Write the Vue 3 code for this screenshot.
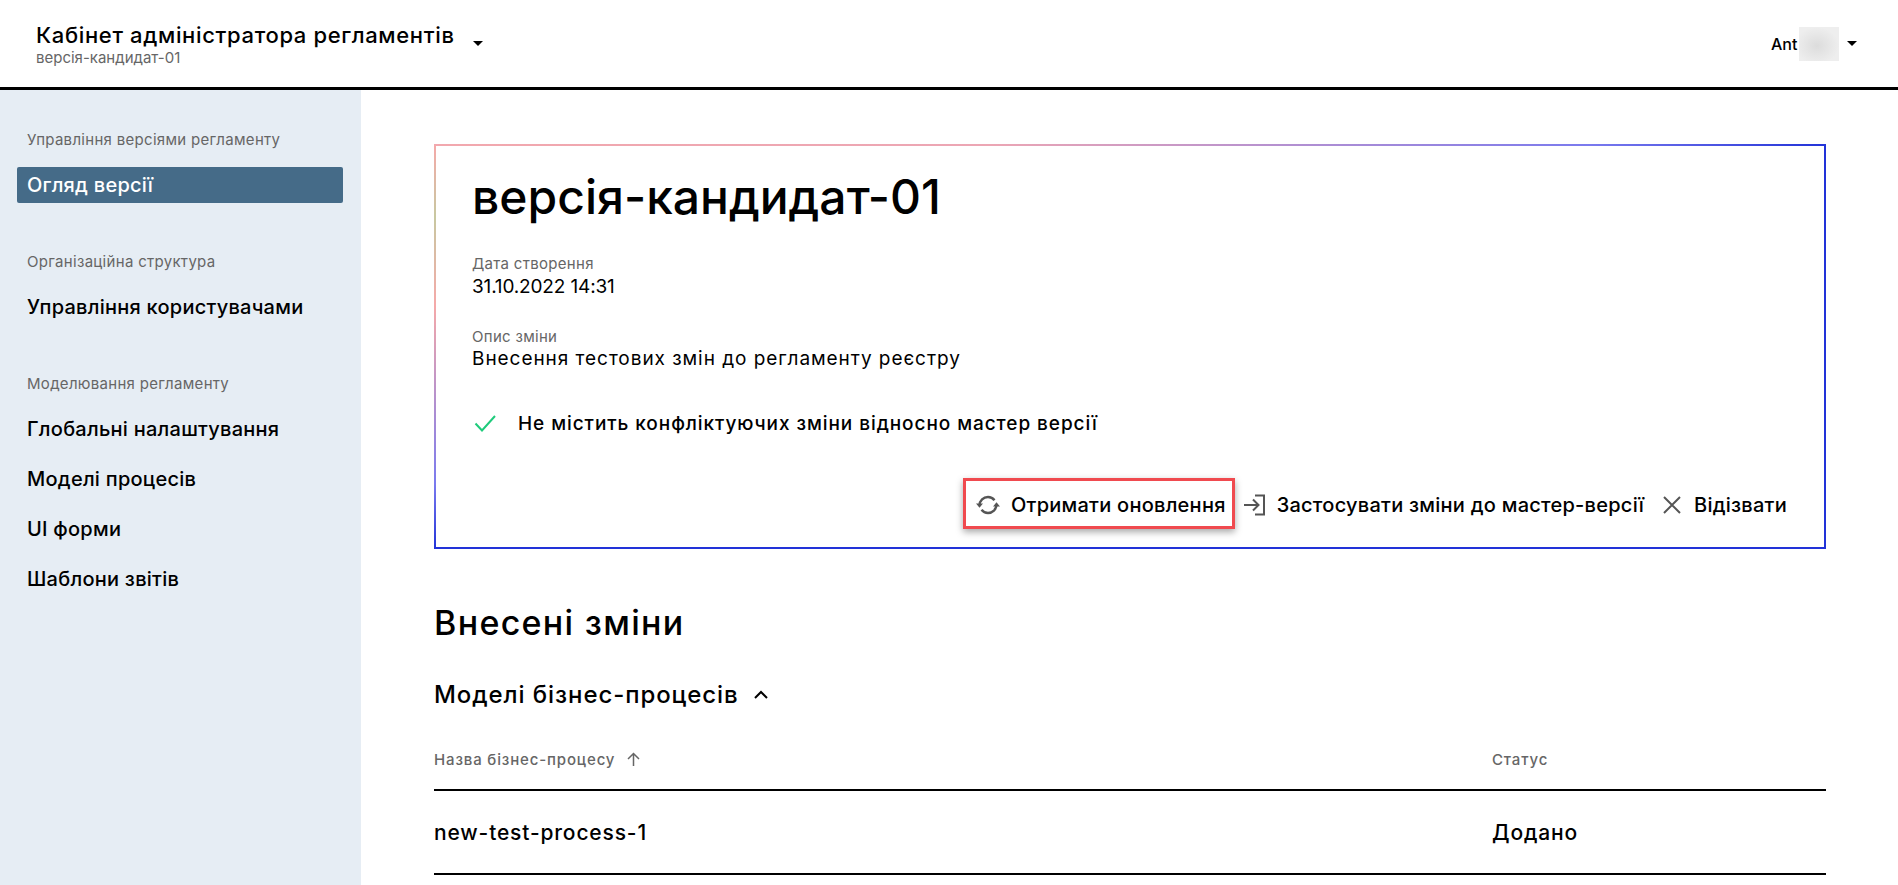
<script setup>
const groups = [
  { title: "Управління версіями регламенту", items: [{ name: "Огляд версії", active: true }] },
  { title: "Організаційна структура", items: [{ name: "Управління користувачами" }] },
  {
    title: "Моделювання регламенту",
    items: [
      { name: "Глобальні налаштування" },
      { name: "Моделі процесів" },
      { name: "UI форми" },
      { name: "Шаблони звітів" },
    ],
  },
];
</script>

<template>
  <div class="page">
    <header class="header">
      <div class="brand">
        <div class="brand-text">
          <div class="brand-title">Кабінет адміністратора регламентів</div>
          <div class="brand-sub">версія-кандидат-01</div>
        </div>
        <span class="caret brand-caret"></span>
      </div>
      <div class="user">
        <span class="user-name">Ant</span>
        <span class="user-blur"></span>
        <span class="caret"></span>
      </div>
    </header>

    <div class="body">
      <aside class="sidebar">
        <section v-for="group in groups" :key="group.title" class="nav-group">
          <div class="nav-title">{{ group.title }}</div>
          <a
            v-for="item in group.items"
            :key="item.name"
            :class="['nav-item', { active: item.active }]"
            >{{ item.name }}</a
          >
        </section>
      </aside>

      <main class="main">
        <section class="card">
          <h1 class="card-title">версія-кандидат-01</h1>
          <div class="meta first">
            <div class="meta-label">Дата створення</div>
            <div class="meta-value date">31.10.2022 14:31</div>
          </div>
          <div class="meta">
            <div class="meta-label">Опис зміни</div>
            <div class="meta-value">Внесення тестових змін до регламенту реєстру</div>
          </div>
          <div class="status">
            <svg class="check" width="24" height="24" viewBox="0 0 24 24" fill="none">
              <path d="M2.5 12.5l6.5 7L22 5" stroke="#1fcb7c" stroke-width="2" />
            </svg>
            <span>Не містить конфліктуючих зміни відносно мастер версії</span>
          </div>
          <div class="actions">
            <button class="action highlighted">
              <svg width="24" height="22" viewBox="0 0 24 22" fill="none" stroke="#555" stroke-width="2.4">
                <path d="M3.5 11.5C3.5 6.5 7.5 3 12 3c2.8 0 5 1.2 6.5 3.2" />
                <path d="M20.5 10.5c0 5-4 8.5-8.5 8.5-2.8 0-5-1.2-6.5-3.2" />
                <path d="M0 9.5h7l-3.5 4.2z" fill="#555" stroke="none" />
                <path d="M17 12.5h7l-3.5-4.2z" fill="#555" stroke="none" />
              </svg>
              <span>Отримати оновлення</span>
            </button>
            <button class="action">
              <svg width="22" height="22" viewBox="0 0 22 22" fill="none" stroke="#555" stroke-width="2">
                <path d="M11 1.5h9v19h-9" />
                <path d="M0 11h14" />
                <path d="M9 5.5l5.5 5.5L9 16.5" />
              </svg>
              <span>Застосувати зміни до мастер-версії</span>
            </button>
            <button class="action revoke">
              <svg width="18" height="18" viewBox="0 0 18 18" fill="none" stroke="#555" stroke-width="2">
                <path d="M1 1l16 16M17 1L1 17" />
              </svg>
              <span>Відізвати</span>
            </button>
          </div>
        </section>

        <h2 class="changes-title">Внесені зміни</h2>
        <div class="section-title">
          <span>Моделі бізнес-процесів</span>
          <svg width="14" height="9" viewBox="0 0 14 9" fill="none" stroke="#000" stroke-width="2">
            <path d="M1 8l6-6 6 6" />
          </svg>
        </div>

        <div class="row head">
          <div class="head-cell">
            <span>Назва бізнес-процесу</span>
            <svg width="13" height="14" viewBox="0 0 13 14" fill="none" stroke="#666" stroke-width="1.5">
              <path d="M6.5 14V1.5M1 7l5.5-5.5L12 7" />
            </svg>
          </div>
          <div class="head-cell">Статус</div>
        </div>
        <div class="row">
          <div>new-test-process-1</div>
          <div>Додано</div>
        </div>
      </main>
    </div>
  </div>
</template>

<style scoped>
.page {
  display: flex;
  flex-direction: column;
  height: 885px;
  overflow: hidden;
  font-family: Inter, "Noto Sans", sans-serif;
  color: #000;
}

/* Шапка */
.header {
  display: flex;
  justify-content: space-between;
  align-items: center;
  flex: none;
  height: 87px;
  padding: 0 41px 0 36px;
  border-bottom: 3px solid #000;
}
.brand {
  display: flex;
  align-items: center;
}
.brand-text {
  margin-top: 2px;
}
.brand-title {
  font-size: 22px;
  line-height: 26px;
  font-weight: 500;
  letter-spacing: 0.65px;
}
.brand-sub {
  margin-top: 1px;
  font-size: 15px;
  line-height: 18px;
  color: #666;
}
.brand-caret {
  margin: 0 0 1px 18px;
  align-self: center;
}
.caret {
  display: inline-block;
  width: 0;
  height: 0;
  border-left: 5px solid transparent;
  border-right: 5px solid transparent;
  border-top: 5px solid #000;
}
.user {
  display: flex;
  align-items: center;
}
.user-name {
  width: 28px;
  font-size: 16px;
  font-weight: 500;
}
.user-blur {
  width: 40px;
  height: 34px;
  margin-right: 8px;
  background: radial-gradient(ellipse at 45% 55%, #dcdcdc 0, #eee 70%);
}

/* Боковое меню */
.body {
  display: flex;
  flex: 1;
  min-height: 0;
}
.sidebar {
  flex: none;
  width: 361px;
  box-sizing: border-box;
  padding: 40px 18px 0 17px;
  background: #e6edf4;
}
.nav-group {
  display: flex;
  flex-direction: column;
  gap: 14px;
  margin-bottom: 49px;
}
.nav-title {
  height: 20px;
  margin-bottom: 3px;
  padding-left: 10px;
  font-size: 15px;
  line-height: 20px;
  letter-spacing: 0.3px;
  color: #666;
}
.nav-item {
  height: 36px;
  padding-left: 10px;
  border-radius: 2px;
  font-size: 20px;
  line-height: 36px;
  font-weight: 500;
  letter-spacing: 0.25px;
}
.nav-item.active {
  background: #456b88;
  color: #fff;
}

/* Основная область */
.main {
  flex: 1;
  padding: 54px 72px 0 73px;
  min-width: 0;
}
.card {
  height: 405px;
  box-sizing: border-box;
  padding: 23px 39px 0 38px;
  background:
    linear-gradient(90deg, #f2a8ae 0%, #eca6b4 40%, #7a7aee 83%, #2233d8 100%) top / 100% 2px no-repeat,
    linear-gradient(180deg, #f5a9a9 0%, #c8c8a0 18%, #f5a9a9 40%, #7a7aee 84%, #2233d8 100%) left / 2px 100% no-repeat,
    linear-gradient(#2233d8, #2233d8) right / 2px 100% no-repeat,
    linear-gradient(#2233d8, #2233d8) bottom / 100% 2px no-repeat;
}
.card-title {
  margin: 0;
  font-size: 48px;
  line-height: 60px;
  font-weight: 500;
}
.meta {
  margin-top: 29px;
}
.meta.first {
  margin-top: 27px;
}
.meta-label {
  font-size: 15px;
  line-height: 20px;
  letter-spacing: 0.3px;
  color: #666;
}
.meta-value {
  font-size: 19px;
  line-height: 24px;
  letter-spacing: 0.95px;
}
.meta-value.date {
  padding-top: 1px;
  height: 23px;
  line-height: 23px;
  letter-spacing: -0.15px;
}
.status {
  display: flex;
  align-items: center;
  gap: 21px;
  margin-top: 40px;
  margin-left: 1px;
  height: 24px;
  font-size: 19px;
  font-weight: 500;
  letter-spacing: 0.93px;
}
.actions {
  display: flex;
  justify-content: flex-end;
  align-items: center;
  gap: 19px;
  margin-top: 43px;
  height: 51px;
}
.action {
  display: flex;
  align-items: center;
  gap: 11px;
  padding: 3px 0 0;
  border: 0;
  background: none;
  font: inherit;
  font-size: 20px;
  font-weight: 500;
  letter-spacing: 0.25px;
  color: #000;
}
.action.revoke {
  gap: 13px;
}
.action.highlighted {
  box-sizing: border-box;
  height: 51px;
  margin-right: -10px;
  padding: 3px 6px 0 10px;
  border: 3px solid #f04a4f;
  box-shadow: 0 3px 7px rgba(0, 0, 0, 0.35);
}

.changes-title {
  margin: 54px 0 0;
  font-size: 34px;
  line-height: 40px;
  font-weight: 500;
  letter-spacing: 1.3px;
}
.section-title {
  display: flex;
  align-items: center;
  gap: 15px;
  margin-top: 35px;
  height: 32px;
  font-size: 24px;
  font-weight: 500;
  letter-spacing: 0.92px;
}
.row {
  display: grid;
  grid-template-columns: 1058px 1fr;
  align-items: center;
  height: 82px;
  border-bottom: 2px solid #000;
  font-size: 21px;
  font-weight: 500;
  letter-spacing: 0.85px;
}
.row.head {
  height: 60px;
  margin-top: 19px;
  font-size: 15px;
  font-weight: 500;
  letter-spacing: 0.85px;
  color: #666;
}
.head-cell {
  display: flex;
  align-items: center;
  gap: 12px;
}
</style>

<style>
html,
body {
  margin: 0;
  overflow: hidden;
}
</style>
